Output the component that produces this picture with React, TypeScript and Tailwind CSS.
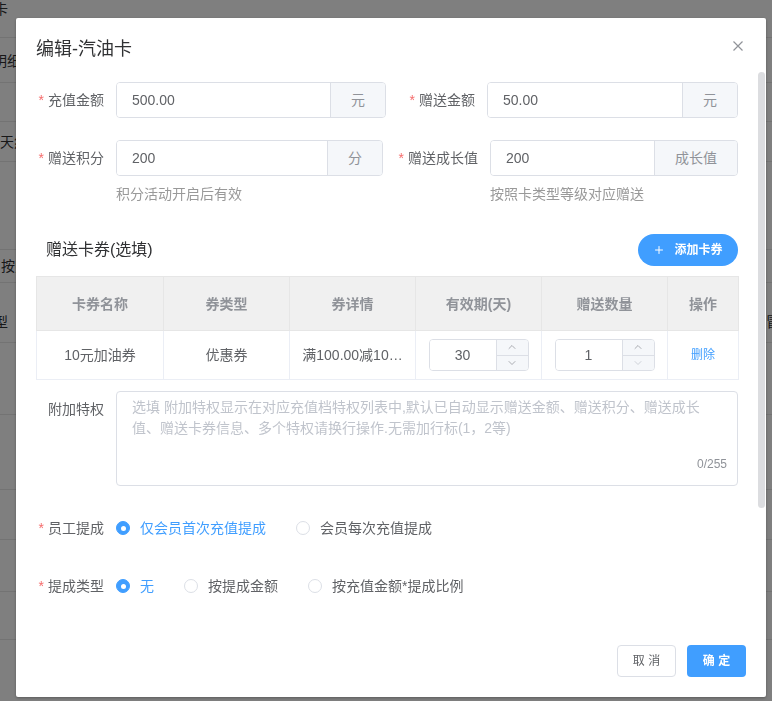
import { ChevronDown, ChevronUp, Plus } from "lucide-react";

const pageRows = [
  { h: "h-[38px]", text: "卡", shift: "-ml-[6px]", align: "items-start" },
  { h: "h-[45px]", text: "明细", shift: "-ml-[7px]", align: "items-center pt-[2px]" },
  { h: "h-[39px]", text: "", shift: "", align: "items-center" },
  { h: "h-[40px]", text: "天然", shift: "ml-0", align: "items-center" },
  { h: "h-[88px]", text: "", shift: "", align: "items-center" },
  { h: "h-[33px]", text: "按照", shift: "ml-[1px]", align: "items-center" },
  { h: "h-[60px]", text: "型", shift: "-ml-[6px]", align: "items-end pb-[11px]" },
  { h: "h-[72px]", text: "", shift: "", align: "items-center" },
  { h: "h-[75px]", text: "", shift: "", align: "items-center" },
  { h: "h-[50px]", text: "", shift: "", align: "items-center" },
  { h: "h-[52px]", text: "", shift: "", align: "items-center" },
  { h: "h-[48px]", text: "", shift: "", align: "items-center" },
];

function Required() {
  return <span className="mr-1 text-[#f56c6c]">*</span>;
}

function FieldLabel({ text, required, className }: { text: string; required?: boolean; className: string }) {
  return (
    <label className={`flex h-9 shrink-0 items-center justify-end pr-3 text-sm text-[#606266] ${className}`}>
      {required && <Required />}
      {text}
    </label>
  );
}

function AppendInput({ value, unit, className, unitClass }: { value: string; unit: string; className: string; unitClass: string }) {
  return (
    <div className={`flex h-9 shrink-0 overflow-hidden rounded-[4px] border border-[#dcdfe6] ${className}`}>
      <input
        readOnly
        value={value}
        className="w-0 min-w-0 flex-1 bg-white pl-[15px] text-sm text-[#606266] outline-none"
      />
      <div className={`flex items-center justify-center border-l border-[#dcdfe6] bg-[#f5f7fa] text-sm text-[#909399] ${unitClass}`}>
        {unit}
      </div>
    </div>
  );
}

function NumberInput({ value, minReached }: { value: string; minReached?: boolean }) {
  return (
    <div className="mx-auto flex h-8 w-[100px] overflow-hidden rounded-[4px] border border-[#dcdfe6]">
      <input readOnly value={value} className="w-0 min-w-0 flex-1 bg-white text-center text-sm text-[#606266] outline-none" />
      <div className="flex w-8 flex-col border-l border-[#dcdfe6] bg-[#f5f7fa]">
        <span className="flex flex-1 items-center justify-center border-b border-[#dcdfe6]">
          <ChevronUp size={12} strokeWidth={1.5} className="text-[#909399]" />
        </span>
        <span className="flex flex-1 items-center justify-center">
          <ChevronDown size={12} strokeWidth={1.5} className={minReached ? "text-[#c0c4cc]" : "text-[#909399]"} />
        </span>
      </div>
    </div>
  );
}

function Radio({ label, checked }: { label: string; checked?: boolean }) {
  return (
    <label className="mr-[30px] flex items-center gap-[10px] text-sm">
      {checked ? (
        <span className="flex h-[14px] w-[14px] items-center justify-center rounded-full border border-[#409eff] bg-[#409eff]">
          <span className="h-[5px] w-[5px] rounded-full bg-white" />
        </span>
      ) : (
        <span className="h-[14px] w-[14px] rounded-full border border-[#dcdfe6] bg-white" />
      )}
      <span className={checked ? "text-[#409eff]" : "text-[#606266]"}>{label}</span>
    </label>
  );
}

export default function App() {
  const headers = ["卡券名称", "券类型", "券详情", "有效期(天)", "赠送数量", "操作"];

  return (
    <div className="min-h-screen bg-white font-['Liberation_Sans','Noto_Sans_CJK_SC',sans-serif]">
      {/* page behind the dialog */}
      <div className="flex flex-col">
        {pageRows.map((row, i) => (
          <div key={i} className={`flex ${row.h} ${row.align} justify-between border-b border-[#e6e6e6] text-sm text-[#303133]`}>
            <span className={`leading-[18px] ${row.shift}`}>{row.text}</span>
            {i === 6 && <span className="-mr-[8px] leading-[18px]">冒</span>}
          </div>
        ))}
      </div>

      {/* overlay + dialog */}
      <div className="fixed inset-0 bg-black/50 pl-4 pt-[18px]">
        <div className="relative flex h-[679px] w-[750px] flex-col rounded-[2px] bg-white shadow-[0_1px_3px_rgba(0,0,0,0.3)]">
          <div className="px-5 pb-[21px] pt-[19px]">
            <h2 className="text-[18px] leading-6 text-[#303133]">编辑-汽油卡</h2>
          </div>
          <button className="absolute right-[23px] top-[23px] h-[10px] w-[10px]">
            <svg viewBox="0 0 10 10" className="h-[10px] w-[10px]" fill="none" stroke="#909399" strokeWidth="1.2">
              <path d="M0.5 0.5L9.5 9.5M9.5 0.5L0.5 9.5" />
            </svg>
          </button>
          <div className="absolute right-[1px] top-[54px] h-[436px] w-[7px] rounded-full bg-[#dcdde0]" />

          <div className="flex-1 overflow-hidden pl-5 pr-[28px]">
            <div className="flex">
              <FieldLabel text="充值金额" required className="w-[80px]" />
              <AppendInput value="500.00" unit="元" className="w-[270px]" unitClass="w-[55px]" />
              <FieldLabel text="赠送金额" required className="w-[101px]" />
              <AppendInput value="50.00" unit="元" className="w-[251px]" unitClass="w-[55px]" />
            </div>

            <div className="mt-[22px] flex">
              <FieldLabel text="赠送积分" required className="w-[80px]" />
              <AppendInput value="200" unit="分" className="w-[267px]" unitClass="w-[55px]" />
              <FieldLabel text="赠送成长值" required className="w-[107px]" />
              <AppendInput value="200" unit="成长值" className="w-[248px]" unitClass="w-[83px]" />
            </div>

            <div className="mt-2 flex text-sm leading-5 text-[#999999]">
              <div className="w-[454px] pl-[80px]">积分活动开启后有效</div>
              <div>按照卡类型等级对应赠送</div>
            </div>

            <div className="mt-[30px] flex h-8 items-center justify-between">
              <span className="pl-[10px] text-base text-[#303133]">赠送卡券(选填)</span>
              <button className="flex h-8 w-[100px] items-center justify-center gap-[9px] rounded-full bg-[#409eff] text-xs font-bold text-white">
                <Plus size={12} strokeWidth={2} />
                添加卡券
              </button>
            </div>

            <table className="mt-[10px] w-[702px] table-fixed border-collapse text-sm">
              <colgroup>
                <col className="w-[127px]" />
                <col className="w-[126px]" />
                <col className="w-[126px]" />
                <col className="w-[126px]" />
                <col className="w-[126px]" />
                <col className="w-[71px]" />
              </colgroup>
              <thead>
                <tr className="h-[54px] bg-[#f0f0f0]">
                  {headers.map((h) => (
                    <th key={h} className="border border-[#e6e6e6] font-bold text-[#909399]">
                      {h}
                    </th>
                  ))}
                </tr>
              </thead>
              <tbody>
                <tr className="h-[49px] text-center text-[#606266]">
                  <td className="border border-[#ebeef5]">10元加油券</td>
                  <td className="border border-[#ebeef5]">优惠券</td>
                  <td className="whitespace-nowrap border border-[#ebeef5]">满100.00减10…</td>
                  <td className="border border-[#ebeef5]">
                    <NumberInput value="30" />
                  </td>
                  <td className="border border-[#ebeef5]">
                    <NumberInput value="1" minReached />
                  </td>
                  <td className="border border-[#ebeef5] text-xs text-[#409eff]">删除</td>
                </tr>
              </tbody>
            </table>

            <div className="mt-[11px] flex">
              <FieldLabel text="附加特权" className="w-[80px]" />
              <div className="relative h-[95px] flex-1">
                <textarea
                  readOnly
                  placeholder={
                    "选填 附加特权显示在对应充值档特权列表中,默认已自动显示赠送金额、赠送积分、赠送成长\n值、赠送卡券信息、多个特权请换行操作.无需加行标(1，2等)"
                  }
                  className="h-full w-full resize-none overflow-hidden rounded-[4px] border border-[#dcdfe6] px-[15px] py-[5px] text-sm leading-[21px] text-[#606266] outline-none placeholder:text-[#c0c4cc]"
                />
                <span className="absolute bottom-[14px] right-[11px] text-xs leading-4 text-[#909399]">0/255</span>
              </div>
            </div>

            <div className="mt-6 flex h-9 items-center">
              <FieldLabel text="员工提成" required className="w-[80px]" />
              <Radio label="仅会员首次充值提成" checked />
              <Radio label="会员每次充值提成" />
            </div>

            <div className="mt-[22px] flex h-9 items-center">
              <FieldLabel text="提成类型" required className="w-[80px]" />
              <Radio label="无" checked />
              <Radio label="按提成金额" />
              <Radio label="按充值金额*提成比例" />
            </div>
          </div>

          <div className="flex justify-end gap-[11px] px-5 pb-5">
            <button className="h-8 w-[59px] rounded-[4px] border border-[#dcdfe6] bg-white text-xs text-[#606266]">
              取 消
            </button>
            <button className="h-8 w-[59px] rounded-[4px] bg-[#409eff] text-xs font-bold text-white">确 定</button>
          </div>
        </div>
      </div>
    </div>
  );
}
